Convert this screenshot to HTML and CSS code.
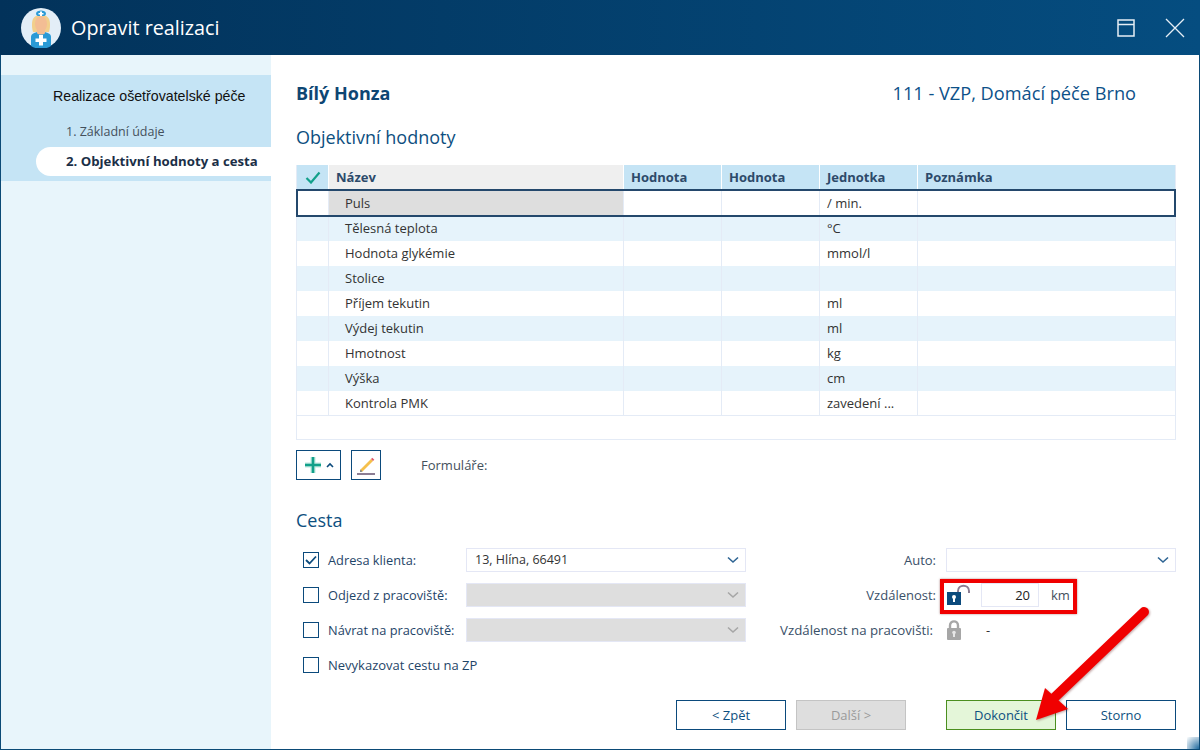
FILE: index.html
```html
<!DOCTYPE html>
<html lang="cs">
<head>
<meta charset="utf-8">
<title>Opravit realizaci</title>
<link rel="stylesheet" href="styles.css">
</head>
<body>
<div class="window">
  <header class="titlebar">
    <svg class="avatar" viewBox="0 0 40 40" width="40" height="40">
      <circle cx="20" cy="20" r="20" fill="#e3eef7"/>
      <path d="M12 24c-1-3-1-6-1-8 0-6 3-9 9-9s9 3 9 9c0 2 0 5-1 8z" fill="#f2cf8c"/>
      <path d="M10 38V29c0-3 3-4 6-5h8c3 1 6 2 6 5v9a20 20 0 0 1-20 0z" fill="#2a9ad6"/>
      <path d="M16 22h8v3c-1 2-7 2-8 0z" fill="#f3bd94"/>
      <ellipse cx="20" cy="16" rx="6" ry="8" fill="#f3bd94"/>
      <path d="M15 5.500c0-4 10-4 10 0 0 1.500-1 2.500-2 2.500h-6c-1 0-2-1-2-2.500z" fill="#2a9ad6"/>
      <path d="M19 3.500h2v1.500h1.500v1.500H21V8h-2V6.500h-1.500V5H19z" fill="#fff"/>
      <path d="M18 27h4v3.500h3.500v3.500H22v3.500h-4V34h-3.500v-3.500H18z" fill="#fff"/>
    </svg>
    <h1 class="title">Opravit realizaci</h1>
    <div class="winctl">
      <svg width="18" height="18" viewBox="0 0 18 18"><path d="M1 1h16v16H1zM1 5.500h16" fill="none" stroke="#e6eef5" stroke-width="1.500"/></svg>
      <svg width="20" height="20" viewBox="0 0 20 20"><path d="M1 1l18 18M19 1L1 19" fill="none" stroke="#e6eef5" stroke-width="1.300"/></svg>
    </div>
  </header>
  <div class="body">
    <nav class="sidebar">
      <div class="steps">
        <div class="steps-title">Realizace ošetřovatelské péče</div>
        <div class="step">1. Základní údaje</div>
        <div class="step step-active">2. Objektivní hodnoty a cesta</div>
      </div>
    </nav>
    <main class="main">
      <div class="head">
        <div class="patient">Bílý Honza</div>
        <div class="context">111 - VZP, Domácí péče Brno</div>
      </div>
      <h2 class="section section-values">Objektivní hodnoty</h2>
      <div class="table">
        <div class="row row-head">
          <div class="cell cell-check"><svg width="16" height="13" viewBox="0 0 16 13"><path d="M1.500 7l4.500 4.500L14.500 1.500" fill="none" stroke="#12a08a" stroke-width="2.200"/></svg></div>
          <div class="cell cell-name">Název</div>
          <div class="cell">Hodnota</div>
          <div class="cell">Hodnota</div>
          <div class="cell">Jednotka</div>
          <div class="cell">Poznámka</div>
        </div>
        <div class="row row-selected"><div class="cell"></div><div class="cell cell-name cell-indent">Puls</div><div class="cell"></div><div class="cell"></div><div class="cell">/ min.</div><div class="cell"></div></div>
        <div class="row row-alt"><div class="cell"></div><div class="cell cell-indent">Tělesná teplota</div><div class="cell"></div><div class="cell"></div><div class="cell">°C</div><div class="cell"></div></div>
        <div class="row"><div class="cell"></div><div class="cell cell-indent">Hodnota glykémie</div><div class="cell"></div><div class="cell"></div><div class="cell">mmol/l</div><div class="cell"></div></div>
        <div class="row row-alt"><div class="cell"></div><div class="cell cell-indent">Stolice</div><div class="cell"></div><div class="cell"></div><div class="cell"></div><div class="cell"></div></div>
        <div class="row"><div class="cell"></div><div class="cell cell-indent">Příjem tekutin</div><div class="cell"></div><div class="cell"></div><div class="cell">ml</div><div class="cell"></div></div>
        <div class="row row-alt"><div class="cell"></div><div class="cell cell-indent">Výdej tekutin</div><div class="cell"></div><div class="cell"></div><div class="cell">ml</div><div class="cell"></div></div>
        <div class="row"><div class="cell"></div><div class="cell cell-indent">Hmotnost</div><div class="cell"></div><div class="cell"></div><div class="cell">kg</div><div class="cell"></div></div>
        <div class="row row-alt"><div class="cell"></div><div class="cell cell-indent">Výška</div><div class="cell"></div><div class="cell"></div><div class="cell">cm</div><div class="cell"></div></div>
        <div class="row row-last"><div class="cell"></div><div class="cell cell-indent">Kontrola PMK</div><div class="cell"></div><div class="cell"></div><div class="cell">zavedení ...</div><div class="cell"></div></div>
      </div>
      <div class="toolbar">
        <button class="tool tool-add">
          <svg width="18" height="18" viewBox="0 0 18 18"><path d="M9 1v16M1 9h16" stroke="#bfe8df" stroke-width="5"/><path d="M9 1v16M1 9h16" stroke="#12a08a" stroke-width="2.600"/></svg>
          <svg width="8" height="6" viewBox="0 0 8 6"><path d="M1 5l3-3 3 3" fill="none" stroke="#0b4a7c" stroke-width="1.600"/></svg>
        </button>
        <button class="tool tool-edit">
          <svg width="20" height="20" viewBox="0 0 20 20"><path d="M4.500 14.500L15 4l2 2L6.500 16.500l-2.500.500z" fill="#f5c04c"/><path d="M15 4l1.300-1.300 2 2L17 6z" fill="#e0596b"/><path d="M4.500 14.500l-.500 2.500 2.500-.500z" fill="#6b7a8c"/><path d="M1 19h18" stroke="#8c7d93" stroke-width="2"/></svg>
        </button>
        <span class="forms-label">Formuláře:</span>
      </div>
      <h2 class="section section-route">Cesta</h2>
      <div class="route">
        <label class="check"><span class="box"><svg width="12" height="10" viewBox="0 0 12 10"><path d="M1 5l3.500 3.500L11 1.500" fill="none" stroke="#0b4a7c" stroke-width="1.800"/></svg></span>Adresa klienta:</label>
        <div class="select"><span>13, Hlína, 66491</span><svg class="chev" width="12" height="8" viewBox="0 0 12 8"><path d="M1 1.500l5 4.500 5-4.500" fill="none" stroke="#2e6493" stroke-width="1.600"/></svg></div>
        <div class="label-right">Auto:</div>
        <div class="select"><span></span><svg class="chev" width="12" height="8" viewBox="0 0 12 8"><path d="M1 1.500l5 4.500 5-4.500" fill="none" stroke="#2e6493" stroke-width="1.600"/></svg></div>

        <label class="check"><span class="box"></span>Odjezd z pracoviště:</label>
        <div class="select select-off"><span></span><svg class="chev" width="12" height="8" viewBox="0 0 12 8"><path d="M1 1.500l5 4.500 5-4.500" fill="none" stroke="#a6a6a6" stroke-width="1.600"/></svg></div>
        <div class="label-right">Vzdálenost:</div>
        <div class="distance">
          <svg class="lock-open" width="24" height="22" viewBox="0 0 24 22"><path d="M12 10V7c0-7 11-7 11 0v2" fill="none" stroke="#8c7d93" stroke-width="2"/><rect x="1" y="8" width="14" height="13" fill="#0b4a7c"/><circle cx="8" cy="13" r="2" fill="#fff"/><path d="M7 13h2v5H7z" fill="#fff"/></svg>
          <div class="num">20</div>
          <span class="unit">km</span>
        </div>

        <label class="check"><span class="box"></span>Návrat na pracoviště:</label>
        <div class="select select-off"><span></span><svg class="chev" width="12" height="8" viewBox="0 0 12 8"><path d="M1 1.500l5 4.500 5-4.500" fill="none" stroke="#a6a6a6" stroke-width="1.600"/></svg></div>
        <div class="label-right label-tight">Vzdálenost na pracovišti:</div>
        <div class="distance">
          <svg class="lock-closed" width="14" height="20" viewBox="0 0 14 20"><path d="M3 9V5.500c0-5.500 8-5.500 8 0V9" fill="none" stroke="#a6a6a6" stroke-width="2.400"/><rect y="8" width="14" height="12" rx="1" fill="#a6a6a6"/><circle cx="7" cy="12.500" r="1.800" fill="#e6e6e6"/><path d="M6 13h2v4H6z" fill="#e6e6e6"/></svg>
          <span class="dash">-</span>
        </div>

        <label class="check check-full"><span class="box"></span>Nevykazovat cestu na ZP</label>
      </div>
      <div class="footer">
        <button class="btn">&lt; Zpět</button>
        <button class="btn btn-off">Další &gt;</button>
        <button class="btn btn-ok">Dokončit</button>
        <button class="btn">Storno</button>
      </div>
    </main>
  </div>
  <div class="highlight"></div>
  <svg class="arrow" width="130" height="130" viewBox="0 0 130 130">
    <path d="M114 12L24 98" stroke="#f00000" stroke-width="10" stroke-linecap="round"/>
    <path d="M6 120l9-32 23 21z" fill="#f00000"/>
  </svg>
  <div class="grip"></div>
</div>
</body>
</html>
```
FILE: styles.css
```css
* { box-sizing: border-box; }
html, body { margin: 0; padding: 0; }
body { width: 1200px; height: 750px; overflow: hidden; font-family: "Open Sans", sans-serif; font-size: 13px; color: #333; background: #fff; }

.window { position: relative; width: 1200px; height: 750px; display: flex; flex-direction: column; border: 1px solid #0b4a76; border-top: 0; }

.titlebar { flex: none; height: 55px; margin: 0 -1px; display: flex; align-items: center; padding-left: 21px; background: linear-gradient(90deg, #02325a 0%, #054d80 100%); }
.avatar { flex: none; }
.title { margin: 0 0 0 10px; font-size: 19.8px; font-weight: 400; color: #fff; }
.winctl { margin-left: auto; display: flex; align-items: center; gap: 30px; padding-right: 15px; }

.body { flex: 1; display: flex; min-height: 0; }

.sidebar { flex: none; width: 270px; background: #e8f5fb; padding-top: 20px; }
.steps { height: 106px; background: #c5e4f5; padding-top: 11px; }
.steps-title { margin-left: 52px; height: 20px; line-height: 20px; font-family: "Liberation Sans", sans-serif; font-size: 14.2px; color: #111; }
.step { margin-top: 16px; height: 20px; line-height: 20px; padding-left: 65px; font-size: 12.5px; color: #44505c; }
.step-active { margin: 5px 0 0 35px; height: 29px; line-height: 29px; padding-left: 30px; border-radius: 15px 0 0 15px; background: #fff; font-size: 13.2px; font-weight: 700; color: #1b2f47; }

.main { flex: 1; min-width: 0; display: flex; flex-direction: column; padding: 25px 23px 19px 25px; }

.head { display: flex; justify-content: space-between; align-items: center; height: 28px; padding-bottom: 2px; }
.patient { font-size: 18px; font-weight: 700; color: #0d4673; }
.context { font-size: 18.2px; color: #0d5189; padding-right: 40px; }

.section { margin: 0; font-size: 18px; font-weight: 400; color: #0d4f80; line-height: 24px; }
.section-values { margin-top: 17px; }
.section-route { margin-top: 28px; }

.table { margin-top: 16px; height: 275px; border: 1px solid #e4ebf6; border-top: 0; flex: none; }
.row { display: grid; grid-template-columns: 32px 295px 98px 98px 98px 1fr; height: 25px; line-height: 25px; }
.cell { border-right: 1px solid #e4ebf6; padding-left: 7px; white-space: nowrap; overflow: hidden; }
.cell:last-child { border-right: 0; }
.cell-indent { padding-left: 16px; }
.row-head { background: #c5e4f5; font-weight: 700; color: #2d4a6a; }
.row-head .cell { border-right-color: #fff; }
.cell-check { display: flex; align-items: center; justify-content: center; padding: 0; }
.cell-name { background: #efefef; }
.row-selected { position: relative; height: 26px; line-height: 26px; outline: 2px solid #24486c; outline-offset: -1px; }
.row-selected .cell-name { background: #dedede; }
.row-alt { background: #e6f3fb; }
.row-last { border-bottom: 1px solid #e4ebf6; }

.toolbar { margin-top: 10px; height: 30px; display: flex; align-items: center; flex: none; }
.tool { height: 30px; padding: 0; border: 1.500px solid #0b4a7c; background: #fff; display: flex; align-items: center; justify-content: center; }
.tool-add { width: 45px; gap: 4px; }
.tool-edit { width: 30px; margin-left: 10px; }
.forms-label { margin-left: 40px; color: #44505c; }

.route { margin-top: 10px; display: grid; grid-template-columns: 170px 280px 200px 230px; grid-auto-rows: 35px; align-items: center; flex: none; }
.check { display: flex; align-items: center; gap: 9px; padding-left: 7px; color: #1f4568; font-size: 12.8px; }
.check-full { grid-column: 1 / -1; font-size: 13px; }
.box { width: 16px; height: 16px; border: 1.500px solid #0b4a7c; background: #fff; display: flex; align-items: center; justify-content: center; flex: none; }
.select { height: 24px; display: flex; align-items: center; justify-content: space-between; padding: 0 6px 0 8px; border: 1px solid #e4e7f5; background: #fff; color: #333; font-size: 12.5px; }
.select-off { background: #dedede; }
.label-right { text-align: right; padding-right: 10px; color: #3a5068; }
.label-tight { padding-right: 13px; white-space: nowrap; font-size: 13.25px; }
.distance { display: flex; align-items: center; height: 24px; }
.num { margin-left: 11px; width: 58px; height: 24px; line-height: 22px; border: 1px solid #e4e7f5; text-align: right; padding-right: 8px; color: #222; }
.unit { margin-left: 12px; color: #44505c; }
.lock-closed { margin-left: 1px; }
.dash { margin-left: 25px; }

.footer { margin-top: auto; display: flex; justify-content: flex-end; }
.btn { width: 110px; height: 30px; padding: 0; margin-left: 10px; border: 1.500px solid #0b4a7c; background: #fff; font: 13px "Open Sans", sans-serif; color: #0d4f80; }
.btn-off { background: #dedede; border-color: #c4c4c4; color: #9a9a9a; }
.btn-ok { margin-left: 40px; background: #e4f6d9; border-color: #4b8f1f; }

.highlight { position: absolute; left: 939px; top: 579px; width: 137px; height: 35px; border: 4px solid #f00000; box-shadow: 0 0 2px rgba(90, 0, 0, .5); }
.arrow { position: absolute; left: 1029px; top: 600px; filter: drop-shadow(1px 1px 1px rgba(80, 0, 0, .35)); }
.grip { position: absolute; right: 0; bottom: 0; width: 12px; height: 12px; background: radial-gradient(circle at 100% 100%, #1f6a9e 0%, rgba(31, 106, 158, .3) 70%, rgba(31, 106, 158, 0) 100%); }
```
